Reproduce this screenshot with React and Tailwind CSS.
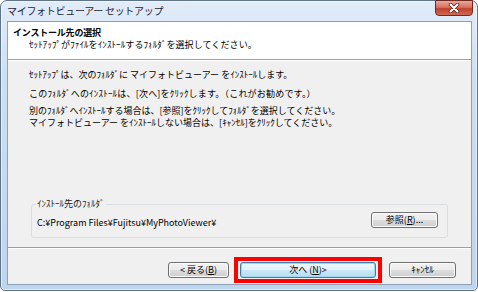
const btn =
  "flex h-[16px] items-center justify-center rounded-[3px] border border-[#707070] bg-[linear-gradient(#f2f2f2_0%,#ebebeb_50%,#dddddd_50%,#cfcfcf_100%)] shadow-[inset_0_0_0_1px_#fbfbfb] text-[9px] leading-[12px] text-black";

function CloseButton() {
  return (
    <div className="-mr-[1px] -mt-[1px] flex h-[16px] w-[38px] items-center justify-center rounded-b-[4px] border border-[#6d2a22] bg-[linear-gradient(#e9a99c_0%,#d7705f_45%,#c2412c_55%,#cf6a55_100%)]">
      <svg width="12" height="10" viewBox="0 0 12 10">
        <path d="M2.5 1.5 L9.5 8.5 M9.5 1.5 L2.5 8.5" stroke="#5a2a24" strokeWidth="3.6" strokeLinecap="round" />
        <path d="M2.5 1.5 L9.5 8.5 M9.5 1.5 L2.5 8.5" stroke="#ffffff" strokeWidth="2" strokeLinecap="round" />
      </svg>
    </div>
  );
}

export default function App() {
  return (
    <div className="h-[292px] w-[478px] bg-white font-['Noto_Sans_CJK_JP',sans-serif]">
      <div className="flex h-[291px] w-[478px] flex-col rounded-b-[5px] rounded-t-[7px] border border-[#5f7389] bg-[linear-gradient(180deg,#e2ecf8_0%,#cddff2_25%,#bfd5ec_100%)] pb-[5px] pl-[6px] pr-[5px] shadow-[inset_0_0_0_1px_rgba(255,255,255,0.55)]">
        {/* title bar */}
        <div className="flex h-[20px] items-start justify-between">
          <span className="self-center text-[10px] leading-[14px] tracking-[-0.3px] text-[#1e2430]">
            マイフォトビューアー セットアップ
          </span>
          <CloseButton />
        </div>

        {/* client area */}
        <div className="flex flex-1 flex-col border border-[#8da1b8] bg-[#f0f0f0]">
          <div className="h-[38px] border-b border-[#a0a0a0] bg-white pl-[5px] pt-[5px] text-black">
            <div className="text-[9px] font-bold leading-[12px] tracking-[-0.2px]">インストール先の選択</div>
            <div className="ml-[16px] text-[9px] leading-[12px] tracking-[0.1px]">
              ｾｯﾄｱｯﾌﾟがﾌｧｲﾙをｲﾝｽﾄｰﾙするﾌｫﾙﾀﾞを選択してください。
            </div>
          </div>

          <div className="flex flex-col border-t border-white text-[9px] text-black">
            <div className="pl-[21px] pt-[8px]">
              <p className="leading-[12px]">ｾｯﾄｱｯﾌﾟは、次のﾌｫﾙﾀﾞに マイフォトビューアー をｲﾝｽﾄｰﾙします。</p>
              <p className="mt-[7px] leading-[12px] tracking-[0.2px]">このﾌｫﾙﾀﾞへのｲﾝｽﾄｰﾙは、[次へ]をｸﾘｯｸします。（これがお勧めです。）</p>
              <p className="mt-[5px] leading-[12px]">別のﾌｫﾙﾀﾞへｲﾝｽﾄｰﾙする場合は、[参照]をｸﾘｯｸしてﾌｫﾙﾀﾞを選択してください。</p>
              <p className="leading-[12px]">マイフォトビューアー をｲﾝｽﾄｰﾙしない場合は、[ｷｬﾝｾﾙ]をｸﾘｯｸしてください。</p>
            </div>

            <div className="ml-[23px] mt-[75px] flex h-[34px] w-[417px] flex-col rounded-[3px] border border-[#d5dfe5]">
              <span className="-mt-[6px] ml-[4px] w-fit bg-[#f0f0f0] px-[1px] leading-[10px] text-[#1a1a1a]">
                ｲﾝｽﾄｰﾙ先のﾌｫﾙﾀﾞ
              </span>
              <div className="mt-[3px] flex items-start justify-between pl-[5px] pr-[9px]">
                <span className="mt-[5px] leading-[12px]">C:¥Program Files¥Fujitsu¥MyPhotoViewer¥</span>
                <button className={`${btn} w-[67px]`}>
                  参照(<span className="underline">R</span>)...
                </button>
              </div>
            </div>

            <div className="mt-[9px] border-b border-t border-b-white border-t-[#a0a0a0]" />
          </div>

          <div className="flex flex-1 items-start justify-end pr-[15px] pt-[8px]">
            <button className={`${btn} mt-[5px] w-[61px]`}>
              &lt; 戻る(<span className="underline">B</span>)
            </button>
            <div className="ml-[5px] flex h-[26px] w-[148px] items-center border-4 border-[#ff0000] px-[2px]">
              <button className="flex h-[16px] w-full items-center justify-center rounded-[3px] border border-[#3c7fb1] bg-[linear-gradient(#eef7fd_0%,#e0f1fb_50%,#cbe8f8_50%,#b9def3_100%)] shadow-[inset_0_0_0_1px_#9ed6f0] text-[9px] leading-[12px] text-black">
                次へ (<span className="underline">N</span>)&gt;
              </button>
            </div>
            <button className={`${btn} ml-[7px] mt-[5px] w-[67px]`}>
              ｷｬﾝｾﾙ
            </button>
          </div>
        </div>
      </div>
    </div>
  );
}
